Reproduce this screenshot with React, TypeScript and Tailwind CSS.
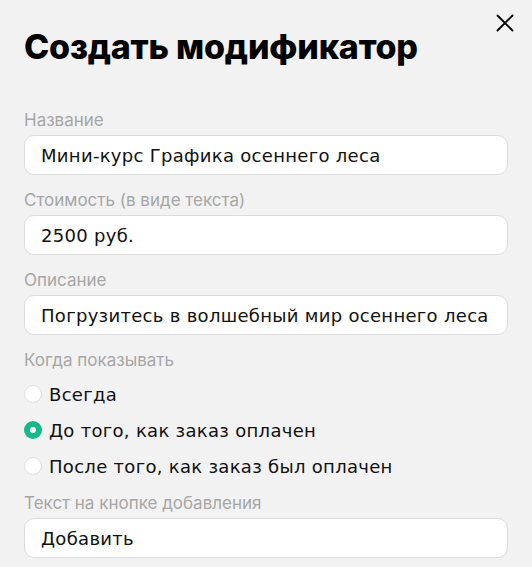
import { X } from "lucide-react";

const FONT = { fontFamily: "Inter, 'Noto Sans', sans-serif" };
const BODY = "font-['DejaVu_Sans',Inter,sans-serif] text-[18px] tracking-[0.3px] text-[#111]";

function Field({ label, value }: { label: string; value: string }) {
  return (
    <div className="mb-[13px]">
      <div className="h-6 text-[17px] leading-6 text-[#a6a6a6]">{label}</div>
      <div
        className={`mt-[3px] flex h-10 items-center overflow-hidden whitespace-nowrap rounded-[10px] border border-[#dcdcdc] bg-white px-4 ${BODY}`}
      >
        {value}
      </div>
    </div>
  );
}

const OPTIONS = ["Всегда", "До того, как заказ оплачен", "После того, как заказ был оплачен"];

export default function App() {
  return (
    <div className="relative h-[567px] w-[532px] overflow-hidden bg-[#f2f2f2] px-6" style={FONT}>
      <button className="absolute right-[12px] top-[8px] text-black">
        <X className="h-[30px] w-[30px]" strokeWidth={1.5} />
      </button>

      <h1 className="pt-[27px] text-[34px] font-extrabold leading-10 tracking-[-0.2px] text-black">
        Создать модификатор
      </h1>

      <div className="mt-[41px]">
        <Field label="Название" value="Мини-курс Графика осеннего леса" />
        <Field label="Стоимость (в виде текста)" value="2500 руб." />
        <Field label="Описание" value="Погрузитесь в волшебный мир осеннего леса" />

        <div className="h-6 text-[17px] leading-6 text-[#a6a6a6]">Когда показывать</div>
        <div className="mt-[4px] flex flex-col">
          {OPTIONS.map((o, i) => (
            <label key={o} className={`flex h-9 items-center gap-[7px] ${BODY}`}>
              {i === 1 ? (
                <span className="flex h-[18px] w-[18px] shrink-0 items-center justify-center rounded-full bg-[#16b98a]">
                  <span className="h-[6px] w-[6px] rounded-full bg-white" />
                </span>
              ) : (
                <span className="h-[18px] w-[18px] shrink-0 rounded-full border border-[#dedede] bg-white" />
              )}
              {o}
            </label>
          ))}
        </div>

        <div className="mt-[7px]">
          <Field label="Текст на кнопке добавления" value="Добавить" />
        </div>
      </div>
    </div>
  );
}
